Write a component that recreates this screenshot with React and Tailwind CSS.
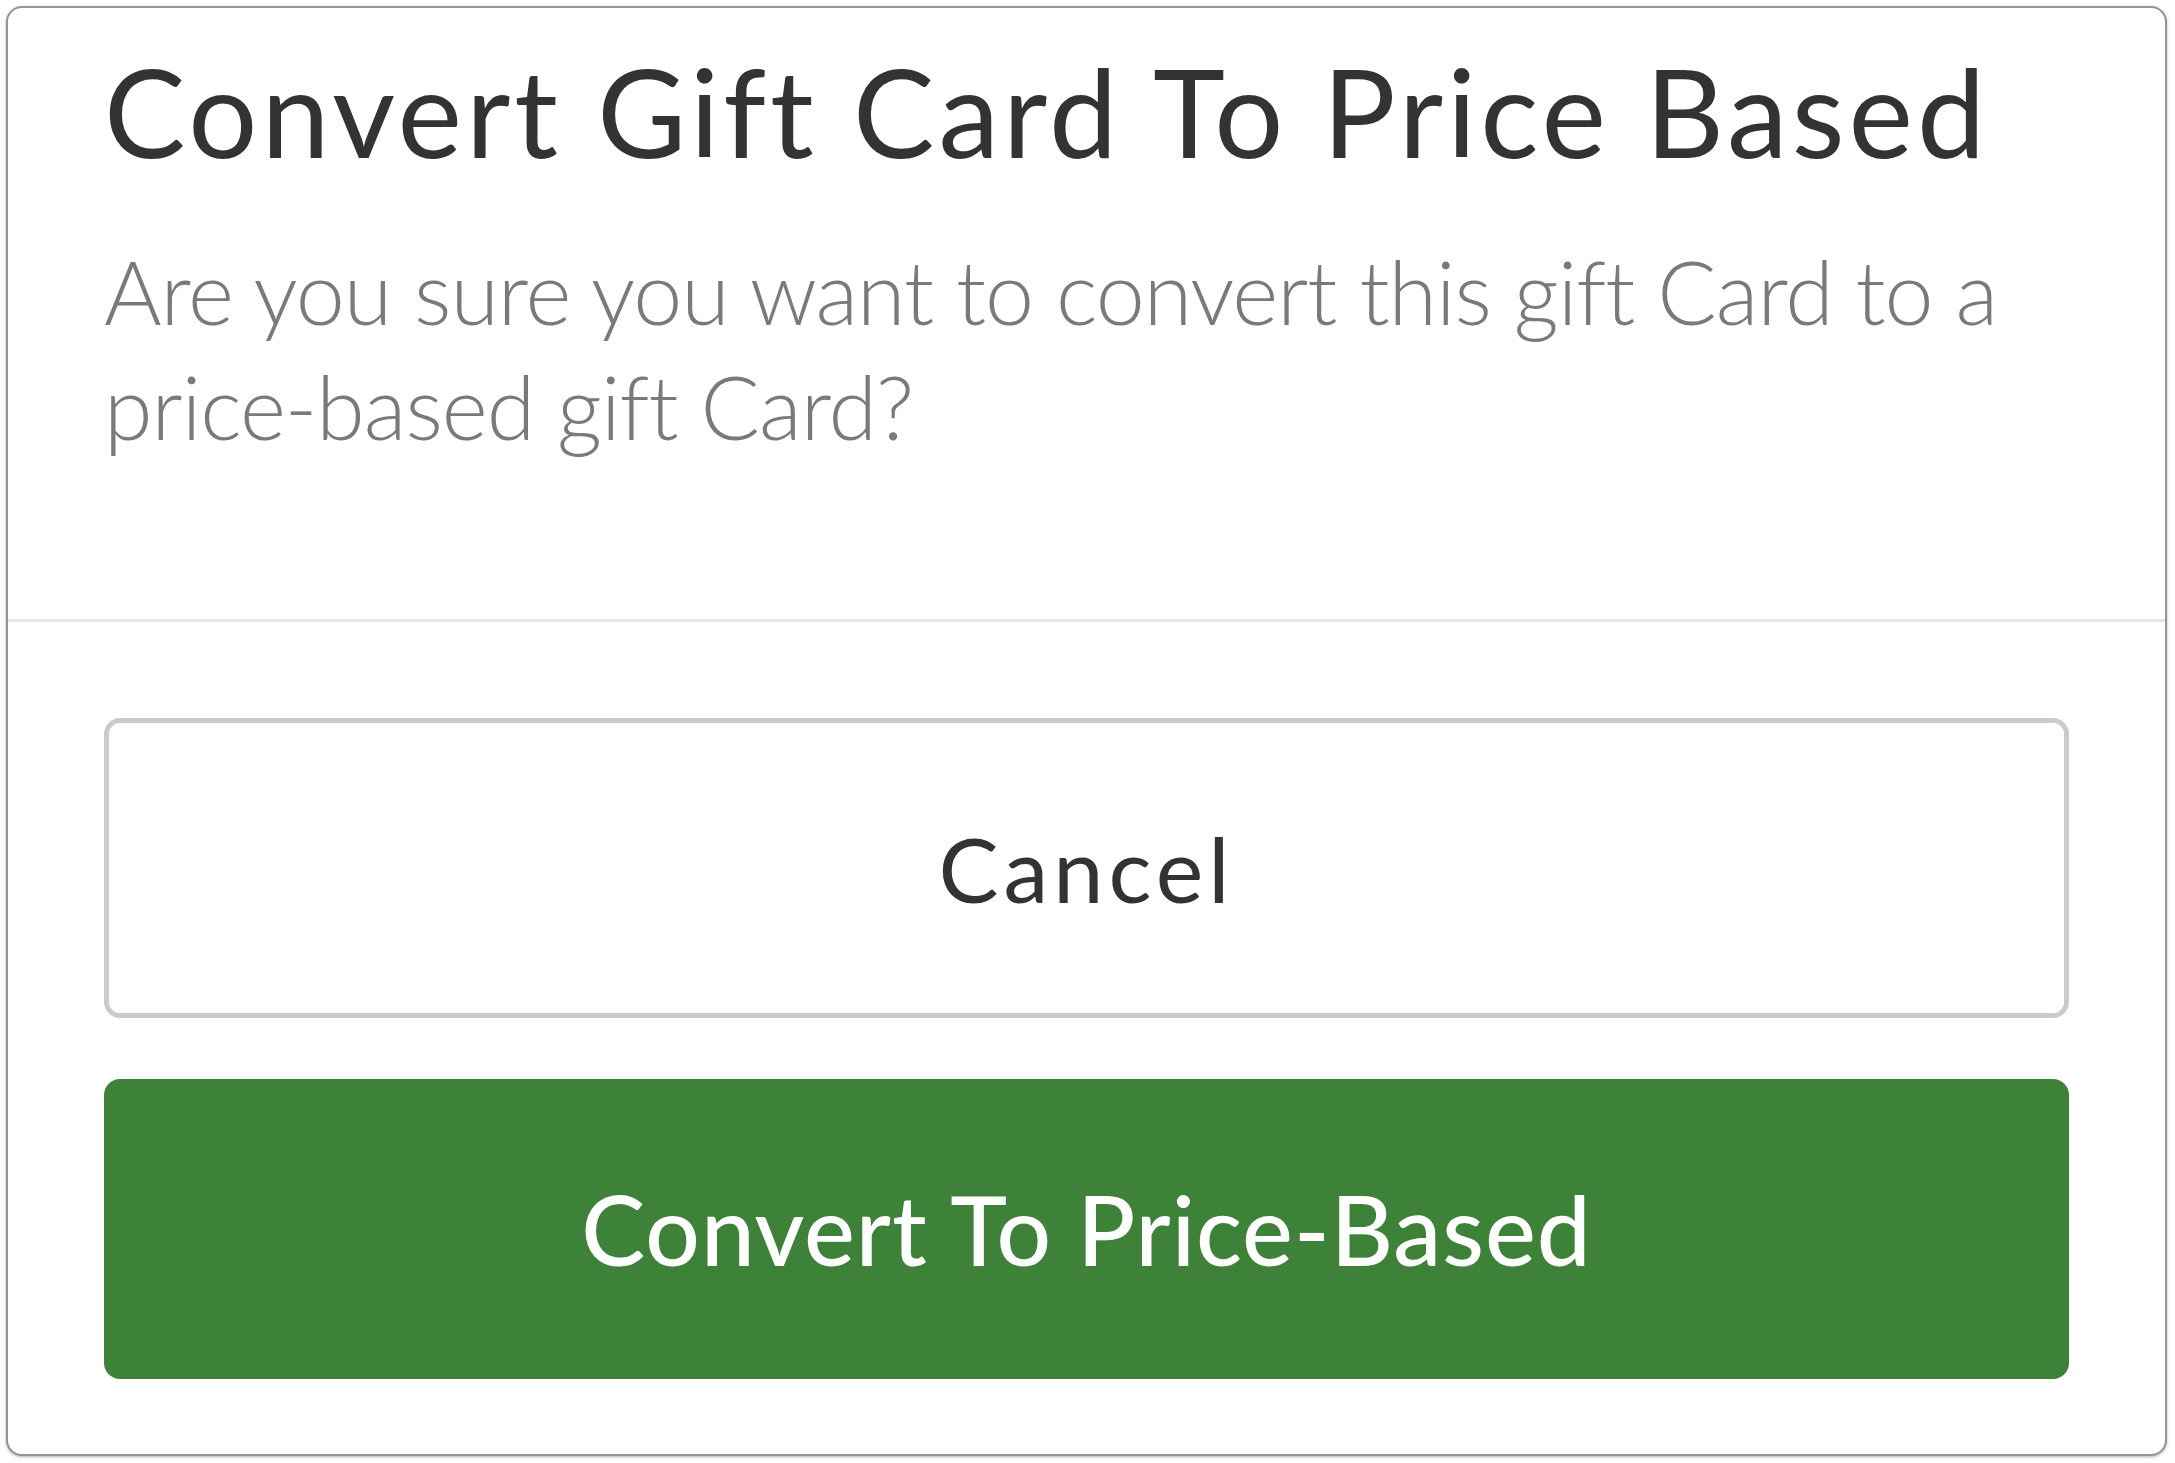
export default function App() {
  return (
    <div className="w-[2175px] h-[1463px] bg-white p-[6px]">
      <div
        className="w-[2161px] h-[1450px] bg-white border-2 border-[#949494] rounded-[16px] shadow-[0_1px_3px_rgba(0,0,0,0.3)] flex flex-col overflow-hidden [font-variant-ligatures:none]"
        style={{ fontFamily: "Lato, 'Open Sans', sans-serif" }}
      >
        {/* Header */}
        <div className="px-[96px] pt-[30px] pb-[155px] border-b-[3px] border-[#e6e6e6]">
          <h1 className="text-[122px] leading-[146px] font-normal tracking-[4px] text-[#333333] whitespace-nowrap">
            Convert Gift Card To Price Based
          </h1>
          <p className="mt-[50px] text-[88px] leading-[115px] font-light tracking-[-1px] text-[#7a7a7a]">
            Are you sure you want to convert this gift Card to a price-based gift Card?
          </p>
        </div>

        {/* Actions */}
        <div className="px-[96px] pt-[96px] flex flex-col gap-[61px]">
          <button className="h-[300px] w-full rounded-[16px] border-[5px] border-[#cbcbcb] bg-white text-[90px] font-normal tracking-[5px] text-[#333333]">
            Cancel
          </button>
          <button className="h-[300px] w-full rounded-[16px] bg-[#3e8239] text-[96px] font-medium tracking-[1px] text-white">
            Convert To Price-Based
          </button>
        </div>
      </div>
    </div>
  );
}
